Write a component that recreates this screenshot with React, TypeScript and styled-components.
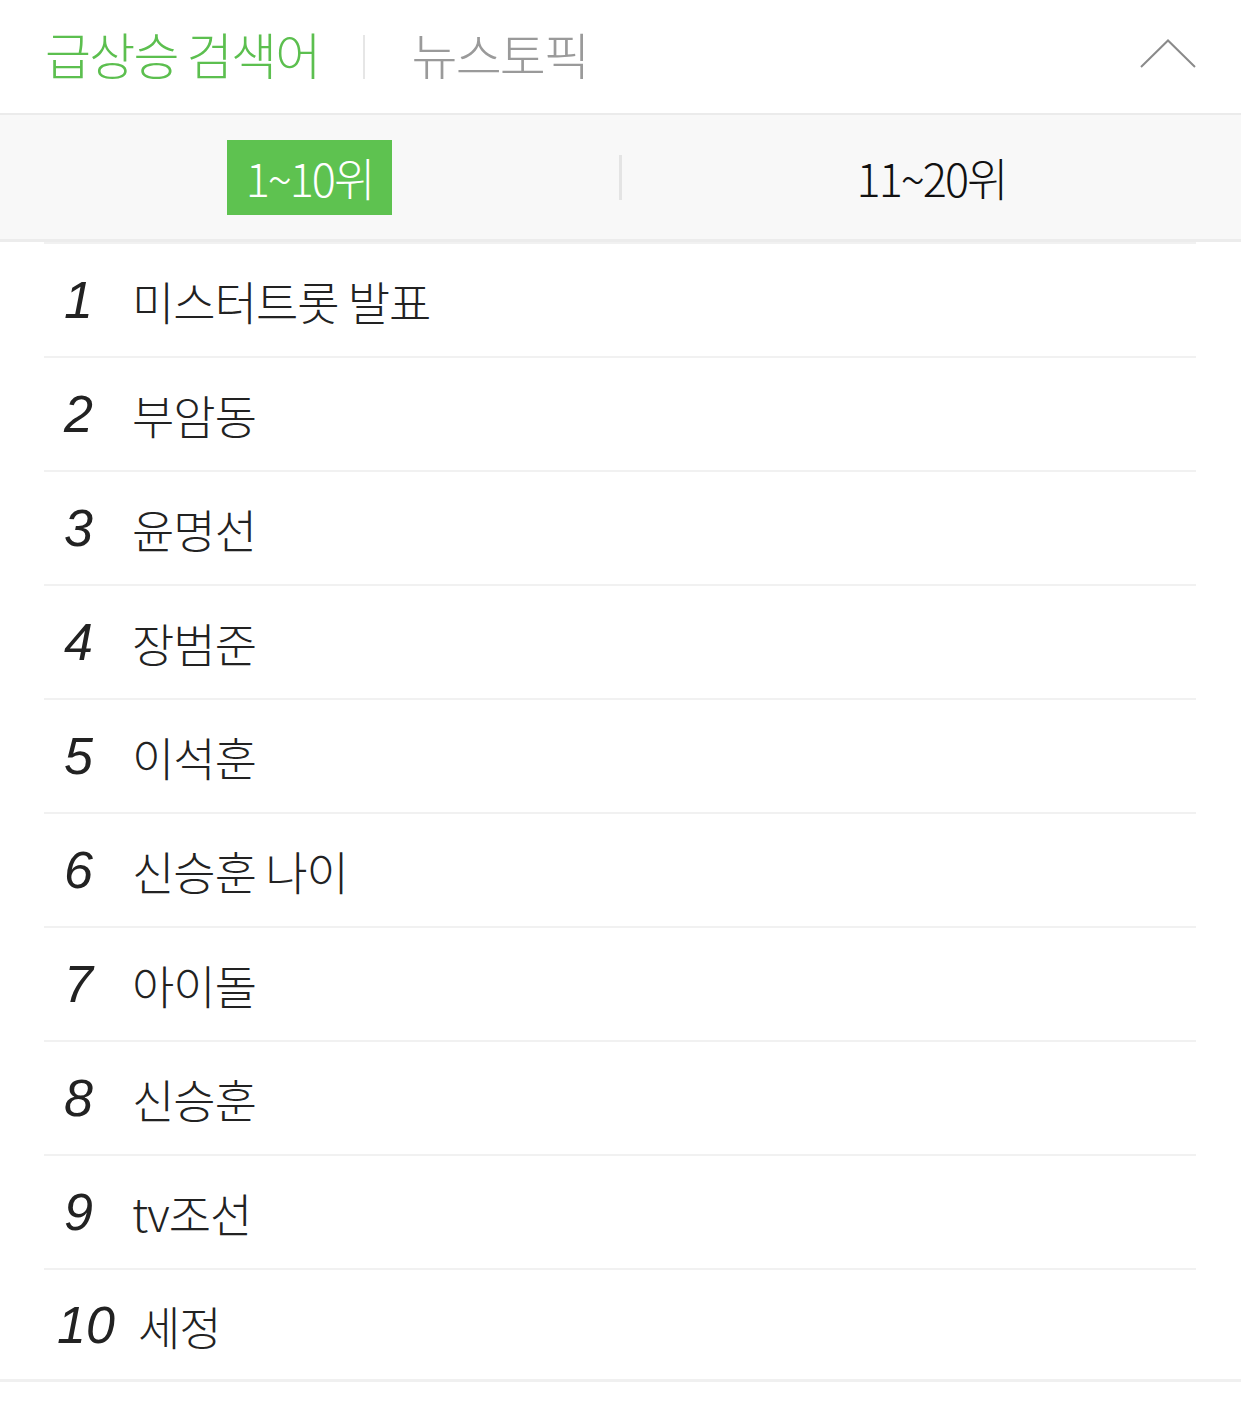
import React, { useState } from 'react'
import styled, { createGlobalStyle } from 'styled-components'

const GlobalStyle = createGlobalStyle`
  body {
    margin: 0;
    background: #ffffff;
    font-family: 'Noto Sans CJK KR', 'Noto Sans', sans-serif;
  }
`

const Wrap = styled.div`
  width: 1241px;
  background: #ffffff;
`

const Header = styled.div`
  display: flex;
  align-items: center;
  height: 113px;
  padding: 0 45px;
  border-bottom: 2px solid #ebebeb;
`

const HeadTitle = styled.span<{ $active?: boolean }>`
  font-size: 50px;
  font-weight: 300;
  letter-spacing: -1.8px;
  line-height: 1;
  margin-top: -8px;
  color: ${(p) => (p.$active ? '#5cbf4f' : '#9a9a9a')};
`

const HeadSep = styled.span`
  width: 2px;
  height: 44px;
  margin: 0 46px 0 44px;
  background: #e6e6e6;
`

const Chevron = styled.button`
  margin-left: auto;
  margin-top: -6px;
  border: none;
  background: none;
  padding: 0;
  display: flex;
  cursor: pointer;
`

const TabBar = styled.div`
  display: flex;
  align-items: center;
  height: 124px;
  background: #f8f8f8;
  border-bottom: 3px solid #ececec;
`

const Tab = styled.div`
  flex: 1;
  display: flex;
  justify-content: center;
`

const TabLabel = styled.span<{ $active?: boolean }>`
  display: inline-flex;
  align-items: center;
  justify-content: center;
  width: 165px;
  height: 75px;
  font-size: 45px;
  font-weight: 300;
  letter-spacing: -2px;
  color: ${(p) => (p.$active ? '#ffffff' : '#111111')};
  background: ${(p) => (p.$active ? '#5ec250' : 'transparent')};
  cursor: pointer;
`

const TabSep = styled.span`
  width: 3px;
  height: 45px;
  background: #e4e4e4;
`

const List = styled.ol`
  list-style: none;
  margin: 0;
  padding: 0 45px 0 44px;
  border-bottom: 3px solid #f0f0f0;
`

const Row = styled.li`
  display: flex;
  align-items: center;
  height: 112px;
  border-top: 2px solid #f1f1f1;

  &:last-child {
    height: 109px;
  }
`

const Rank = styled.span<{ $wide?: boolean }>`
  box-sizing: border-box;
  min-width: ${(p) => (p.$wide ? 94 : 88)}px;
  padding-left: ${(p) => (p.$wide ? 13 : 20)}px;
  font-family: 'Liberation Sans', Arial, sans-serif;
  font-style: italic;
  font-size: 52px;
  color: #222222;
`

const Keyword = styled.span`
  font-size: 46px;
  font-weight: 300;
  letter-spacing: -1px;
  color: #222222;
`

const keywords = [
  '미스터트롯 발표',
  '부암동',
  '윤명선',
  '장범준',
  '이석훈',
  '신승훈 나이',
  '아이돌',
  '신승훈',
  'tv조선',
  '세정',
]

export default function App() {
  const [tab, setTab] = useState(0)

  return (
    <Wrap>
      <GlobalStyle />
      <Header>
        <HeadTitle $active>급상승 검색어</HeadTitle>
        <HeadSep />
        <HeadTitle>뉴스토픽</HeadTitle>
        <Chevron aria-label="접기">
          <svg width="56" height="30" viewBox="0 0 56 30">
            <polyline points="1,28 28,1.5 55,28" fill="none" stroke="#8a8a8a" strokeWidth="2" />
          </svg>
        </Chevron>
      </Header>
      <TabBar>
        <Tab>
          <TabLabel $active={tab === 0} onClick={() => setTab(0)}>
            1~10위
          </TabLabel>
        </Tab>
        <TabSep />
        <Tab>
          <TabLabel $active={tab === 1} onClick={() => setTab(1)}>
            11~20위
          </TabLabel>
        </Tab>
      </TabBar>
      <List>
        {keywords.map((k, i) => (
          <Row key={k}>
            <Rank $wide={i >= 9}>{i + 1}</Rank>
            <Keyword>{k}</Keyword>
          </Row>
        ))}
      </List>
    </Wrap>
  )
}
